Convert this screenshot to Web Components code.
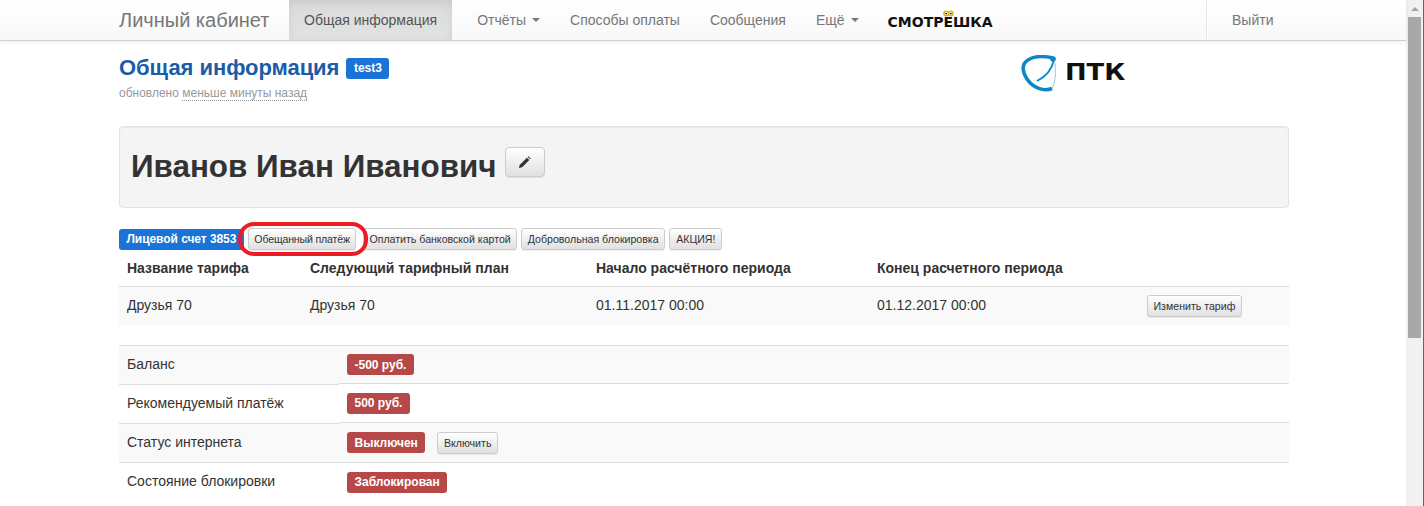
<!doctype html>
<html><head><meta charset="utf-8"><style>
html,body{margin:0;padding:0;height:506px;overflow:hidden;background:#fff}
body{font:14px/20px "Liberation Sans",Arial,sans-serif;color:#333;display:flex}
lk-page{flex:1;min-width:0}
</style></head><body>
<lk-page>
<lk-navbar></lk-navbar>
<lk-container>
  <lk-head></lk-head>
  <lk-jumbo>Иванов Иван Иванович</lk-jumbo>
  <lk-toolbar></lk-toolbar>
  <lk-tariff></lk-tariff>
  <lk-info></lk-info>
</lk-container>
</lk-page>
<lk-scroll></lk-scroll>
<script>
const def=(name,html)=>customElements.define(name,class extends HTMLElement{
  constructor(){super();this.attachShadow({mode:'open'}).innerHTML=html;}
});
def('lk-btn',`<style>:host{display:inline-flex;box-sizing:border-box;height:22px;align-items:center;padding:0 5.5px;border:1px solid #ccc;border-radius:3px;font-size:10.6px;color:#333;white-space:nowrap;background:linear-gradient(#fff,#e0e0e0);box-shadow:inset 0 1px 0 rgba(255,255,255,.15),0 1px 1px rgba(0,0,0,.075)}</style><slot></slot>`);
def('lk-label',`<style>:host{display:inline-flex;box-sizing:border-box;height:21px;align-items:center;padding:0 7.5px;border-radius:3px;font-size:12px;font-weight:700;color:#fff;white-space:nowrap;background:var(--bg,#b64848)}</style><slot></slot>`);
def('lk-nav-item',`<style>:host{display:flex;align-items:center;height:40px;padding:0 15px;color:#777;font-size:14px;white-space:nowrap}
:host([active]){background:linear-gradient(#dbdbdb,#e2e2e2);color:#555;box-shadow:inset 0 3px 9px rgba(0,0,0,.075);}
:host([caret])::after{content:"";margin-left:6px;border-top:4px solid #777;border-left:4px solid transparent;border-right:4px solid transparent}</style><slot></slot>`);
def('lk-navbar',`<style>:host{display:flex;box-sizing:border-box;height:41px;background:linear-gradient(#fff,#f8f8f8);border-bottom:1px solid #d0d0d0;box-shadow:0 1px 5px rgba(0,0,0,.075);padding:0 103px 0 119px;position:relative}
.brand{font-size:20px;color:#777;display:flex;align-items:center;width:170px;white-space:nowrap}
.logo{display:flex;align-items:center;padding:0 0 0 14px;color:#111;font:700 14px "DejaVu Sans",sans-serif;white-space:nowrap;position:relative;top:2px;width:214px;box-sizing:border-box}
.logo span{display:inline-block;position:relative}
.logo svg{position:absolute;left:0;top:-4px}
.sp{flex:1}
.out{border-left:1px solid #e7e7e7;box-shadow:inset 1px 0 0 #fff}
.out lk-nav-item{padding:0 15px 0 25px;width:56px}
</style>
<div class="brand">Личный кабинет</div>
<lk-nav-item active>Общая информация</lk-nav-item>
<lk-nav-item style="margin-left:10px" caret>Отчёты</lk-nav-item>
<lk-nav-item>Способы оплаты</lk-nav-item>
<lk-nav-item>Сообщения</lk-nav-item>
<lk-nav-item caret>Ещё</lk-nav-item>
<div class="logo">СМОТР<span>Ё<svg width="11" height="7" viewBox="0 0 14 8"><circle cx="4" cy="4" r="2.8" fill="#fff" stroke="#e2b21c" stroke-width="2"/><circle cx="10" cy="4" r="2.8" fill="#fff" stroke="#e2b21c" stroke-width="2"/><circle cx="4" cy="4" r="1.1" fill="#111"/><circle cx="10" cy="4" r="1.1" fill="#111"/></svg></span>ШКА</div>
<div class="sp"></div>
<div class="out"><lk-nav-item>Выйти</lk-nav-item></div>`);
def('lk-container',`<style>:host{display:block;padding:0 117px 0 119px}</style><slot></slot>`);
def('lk-head',`<style>:host{display:block;height:85px;position:relative;box-sizing:border-box;padding-top:14px}
h2{margin:0;font-size:22px;line-height:26px;color:#1a5ca8;font-weight:700;display:flex;align-items:center;gap:7px;letter-spacing:-.05px}
lk-label{--bg:#1a73d6;letter-spacing:0}
small{display:block;font-size:12px;line-height:17px;color:#999;margin-top:4px}
abbr{border-bottom:1px dotted #999;text-decoration:none}
.logo{position:absolute;left:901px;top:14px;display:flex;align-items:center;gap:8px;font:700 23px/1 "DejaVu Sans",sans-serif;color:#111}
.logo span{display:inline-block;transform:scaleX(1.12);transform-origin:0 50%;position:relative;top:-1px}
</style>
<div><h2>Общая информация <lk-label>test3</lk-label></h2><small>обновлено <abbr>меньше минуты назад</abbr></small></div>
<div class="logo"><svg width="37" height="37" viewBox="0 0 37 37" fill="none" stroke="#0f86c8"><path d="M32 33.5C24 37 13 33 7 24 2 16 1.5 9 8 5 14 1 24 1 33 3" stroke-width="3.6"/><path d="M32 33.5C35 28 36 20 35 8" stroke-width="1" opacity=".45"/><path d="M34 5C32 14 27 21 17 26" stroke-width="1.8"/><circle cx="33" cy="4" r="2.8" fill="#0f86c8" stroke="none"/></svg><span>ПТК</span></div>`);
def('lk-jumbo',`<style>:host{display:flex;align-items:center;gap:8px;box-sizing:border-box;height:82px;background:#f4f4f4;border:1px solid #e3e3e3;border-radius:4px;padding:0 11px;font-size:31.4px;font-weight:700;color:#333;box-shadow:inset 0 1px 1px rgba(0,0,0,.05)}
lk-btn{height:30px;width:40px;justify-content:center;padding:0;position:relative;top:-5px;border-radius:4px}
</style><span><slot></slot></span><lk-btn><svg width="13" height="13" viewBox="0 0 14 14"><path d="M1 13l.8-3.4L9.6 1.8l2.6 2.6-7.8 7.8zM10.4 1l.8-.6 2.4 2.4-.6.8z" fill="#333"/></svg></lk-btn>`);
def('lk-toolbar',`<style>:host{display:flex;align-items:center;gap:4px;margin-top:20px;height:22px;position:relative}
lk-label{--bg:#1a73d6;letter-spacing:-.06px}
.ring{position:absolute;left:119px;top:-6px;width:130px;height:34px;box-sizing:border-box;border:4px solid #ec1c24;border-radius:16px}
</style><lk-label>Лицевой счет 3853</lk-label><lk-btn style="letter-spacing:-.17px;margin-right:2.5px">Обещанный платёж</lk-btn><lk-btn>Оплатить банковской картой</lk-btn><lk-btn>Добровольная блокировка</lk-btn><lk-btn style="padding:0 6px">АКЦИЯ!</lk-btn><div class="ring"></div>`);
def('lk-tariff',`<style>:host{display:grid;grid-template-columns:183px 286px 281px 270px 150px;font-size:14px}
div{padding:0 8px;display:flex;align-items:center}
.h{font-weight:700;height:37px;box-sizing:border-box;border-bottom:1px solid #ddd}
.c{height:38px;background:#f9f9f9;box-sizing:border-box;padding-bottom:2px}
.b{padding-bottom:0}</style>
<div class="h">Название тарифа</div><div class="h">Следующий тарифный план</div><div class="h">Начало расчётного периода</div><div class="h">Конец расчетного периода</div><div class="h"></div>
<div class="c">Друзья 70</div><div class="c">Друзья 70</div><div class="c">01.11.2017 00:00</div><div class="c">01.12.2017 00:00</div><div class="c b"><lk-btn>Изменить тариф</lk-btn></div>`);
def('lk-info',`<style>:host{display:flex;margin-top:20px}
.l{width:220px}.r{flex:1}
.row{box-sizing:border-box;border-top:1px solid #ddd;display:flex;align-items:center;padding:0 8px;gap:12px}
.l .row{padding-bottom:2px}
.o{background:#f9f9f9}
</style>
<div class="l">
<div class="row o" style="height:39px">Баланс</div>
<div class="row" style="height:39px">Рекомендуемый платёж</div>
<div class="row o" style="height:39px">Статус интернета</div>
<div class="row" style="height:39px">Состояние блокировки</div></div>
<div class="r">
<div class="row o" style="height:38px"><lk-label>-500 руб.</lk-label></div>
<div class="row" style="height:39px"><lk-label>500 руб.</lk-label></div>
<div class="row o" style="height:40px"><lk-label>Выключен</lk-label><lk-btn>Включить</lk-btn></div>
<div class="row" style="height:39px"><lk-label>Заблокирован</lk-label></div></div>`);
def('lk-scroll',`<style>:host{display:flex;flex-direction:column;align-items:center;box-sizing:border-box;width:18px;height:506px;background:#f1f1f1;border-right:1px solid #1a73d6;flex:none}
.a{height:17px;flex:none;display:flex;align-items:center;justify-content:center}
.t{width:13px;height:321px;background:#a8a8a8}
i{border-left:4px solid transparent;border-right:4px solid transparent;border-bottom:4px solid #a3a3a3}</style>
<div class="a"><i></i></div><div class="t"></div>`);
</script>
</body></html>
